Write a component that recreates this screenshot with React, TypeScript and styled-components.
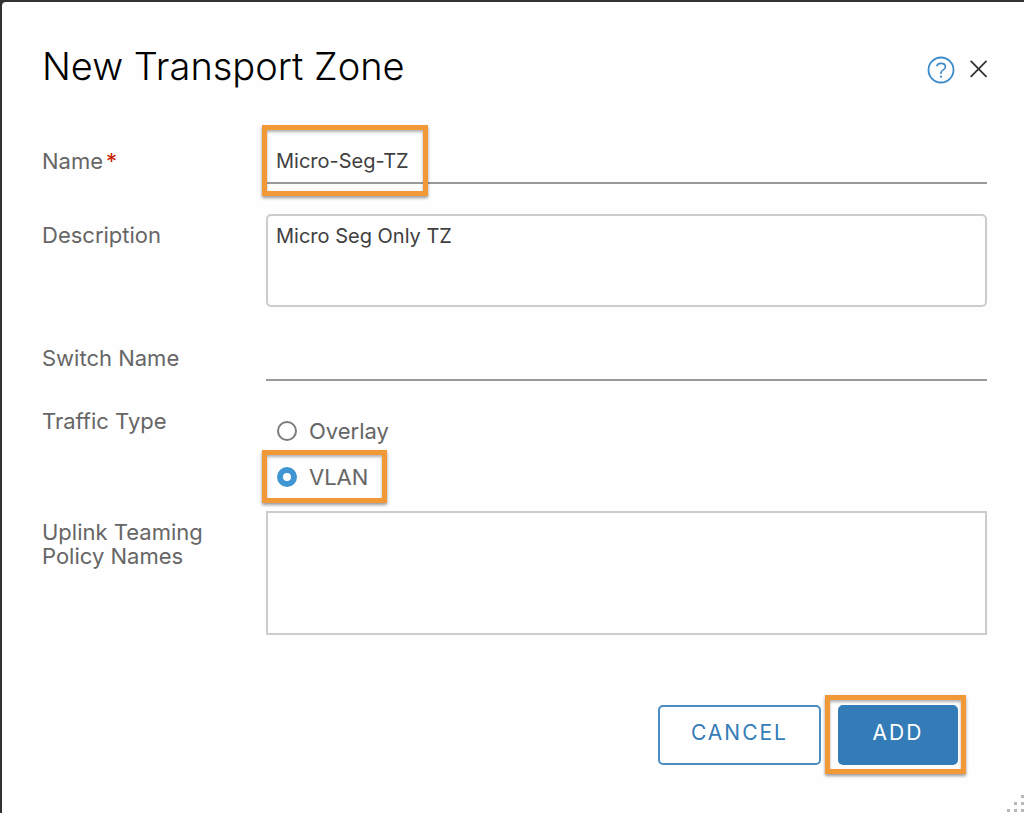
import React, { useState } from "react";
import styled, { createGlobalStyle } from "styled-components";

const GlobalStyle = createGlobalStyle`
  *, *::before, *::after { box-sizing: border-box; }
  body {
    margin: 0;
    background: #333134;
    font-family: Inter, "Open Sans", "Liberation Sans", sans-serif;
  }
`;

const Dialog = styled.main`
  position: relative;
  min-height: 100vh;
  border: solid #333134;
  border-width: 2px 0 0 2px;
  border-radius: 6px 0 0 0;
  background: #fefefe;
  padding: 40px 37px 48px 40px;
`;

const Header = styled.header`
  display: flex;
  align-items: center;
  justify-content: space-between;
  height: 52px;
`;

const Title = styled.h1`
  margin: 0 0 4px;
  color: #000;
  font-size: 38px;
  font-weight: 300;
  line-height: 48px;
`;

const HeaderActions = styled.div`
  display: flex;
  align-items: center;
  gap: 14px;
  margin-top: 4px;
`;

const IconButton = styled.button<{ $color: string }>`
  display: flex;
  padding: 0;
  border: 0;
  background: none;
  color: ${(p) => p.$color};
  cursor: pointer;
`;

const Form = styled.form`
  display: flex;
  flex-direction: column;
`;

const Row = styled.div<{ $top: number }>`
  display: grid;
  grid-template-columns: 224px 1fr;
  align-items: start;
  margin-top: ${(p) => p.$top}px;
`;

const FieldLabel = styled.label<{ $top?: number }>`
  padding: ${(p) => p.$top ?? 0}px 32px 0 0;
  color: #666;
  font-size: 22px;
  font-weight: 400;
  line-height: 24px;
`;

const Required = styled.span`
  margin-left: 3px;
  color: #c92100;
`;

const FieldBox = styled.div`
  position: relative;
`;

const TextInput = styled.input`
  display: block;
  width: 100%;
  height: 48px;
  padding: 4px 10px 0;
  border: 0;
  border-bottom: 2px solid #9a9a9a;
  border-radius: 0;
  outline: 0;
  background: transparent;
  color: #404040;
  font: 400 20px/24px Inter, "Open Sans", sans-serif;
`;

const TextArea = styled.textarea<{ $height: number; $radius: number }>`
  display: block;
  width: 100%;
  height: ${(p) => p.$height}px;
  padding: 8px;
  border: 2px solid #ccc;
  border-radius: ${(p) => p.$radius}px;
  outline: 0;
  background: transparent;
  color: #404040;
  font: 400 20px/24px Inter, "Open Sans", sans-serif;
  resize: none;
`;

const RadioGroup = styled.div`
  display: flex;
  flex-direction: column;
  align-items: flex-start;
  gap: 22px;
  padding: 10px 0 0 11px;
`;

const RadioLabel = styled.label`
  position: relative;
  display: flex;
  align-items: center;
  gap: 12px;
  color: #666;
  font-size: 22px;
  font-weight: 400;
  line-height: 24px;
`;

const Radio = styled.input`
  appearance: none;
  width: 20px;
  height: 20px;
  margin: 0;
  border: 2px solid #7c7c7c;
  border-radius: 50%;
  background: #fff;

  &:checked {
    border: 6px solid #3f96d2;
  }
`;

const Highlight = styled.span<{ $inset: string; $width?: number }>`
  position: absolute;
  inset: ${(p) => p.$inset};
  ${(p) => p.$width && `width: ${p.$width}px;`}
  border: 5px solid #f19937;
  box-shadow: 0 2px 3px rgba(0, 0, 0, 0.4), inset 0 2px 3px rgba(0, 0, 0, 0.3);
  pointer-events: none;
`;

const Actions = styled.footer`
  display: flex;
  justify-content: flex-end;
  gap: 17px;
  margin-top: 70px;
  padding-right: 29px;
`;

const ActionSlot = styled.div`
  position: relative;
`;

const Button = styled.button<{ $primary?: boolean }>`
  min-width: 120px;
  height: 60px;
  padding: 0 31px 4px;
  border: 2px solid ${(p) => (p.$primary ? "#347cb7" : "#4a8dc5")};
  border-radius: 5px;
  background: ${(p) => (p.$primary ? "#347cb7" : "transparent")};
  color: ${(p) => (p.$primary ? "#fff" : "#347cb7")};
  font: 400 21px/24px Inter, "Open Sans", sans-serif;
  letter-spacing: 2px;
  cursor: pointer;
`;

const ResizeGrip = styled.svg`
  position: absolute;
  right: 0;
  bottom: 1px;
`;

const gripDots = [
  [14, 0], [7, 7], [14, 7], [0, 14], [7, 14], [14, 14],
];

export default function App() {
  const [name, setName] = useState("Micro-Seg-TZ");
  const [description, setDescription] = useState("Micro Seg Only TZ");
  const [switchName, setSwitchName] = useState("");
  const [policies, setPolicies] = useState("");
  const [traffic, setTraffic] = useState("vlan");

  return (
    <>
      <GlobalStyle />
      <Dialog>
        <Header>
          <Title>New Transport Zone</Title>
          <HeaderActions>
            <IconButton type="button" aria-label="Help" $color="#3c8bc9">
              <svg width="28" height="28" viewBox="0 0 28 28" fill="none" stroke="currentColor">
                <circle cx="14" cy="14" r="12.5" strokeWidth="1.8" />
                <path d="M9.7 10.2C10.2 8.5 11.8 7.4 14 7.4c2.6 0 4.4 1.3 4.4 3.4 0 1.8-1.2 2.6-2.5 3.3-1.4.8-2 1.4-2 3.1v.7" strokeWidth="1.6" />
                <circle cx="13.9" cy="20.7" r="1.1" fill="currentColor" stroke="none" />
              </svg>
            </IconButton>
            <IconButton type="button" aria-label="Close" $color="#333">
              <svg width="18" height="24" viewBox="0 0 18 24" fill="none" stroke="currentColor" strokeWidth="1.8" strokeLinecap="round">
                <path d="M2.2 3.4 17 18.4M17 3.4 2.2 18.4" />
              </svg>
            </IconButton>
          </HeaderActions>
        </Header>

        <Form id="zone-form" onSubmit={(e) => e.preventDefault()}>
          <Row $top={42}>
            <FieldLabel htmlFor="name" $top={13}>
              Name<Required>*</Required>
            </FieldLabel>
            <FieldBox>
              <TextInput id="name" required value={name} onChange={(e) => setName(e.target.value)} />
              <Highlight $inset="-11px auto -12px -4px" $width={166} />
            </FieldBox>
          </Row>
          <Row $top={30}>
            <FieldLabel htmlFor="description" $top={9}>Description</FieldLabel>
            <TextArea id="description" $height={93} $radius={5} value={description} onChange={(e) => setDescription(e.target.value)} />
          </Row>
          <Row $top={26}>
            <FieldLabel htmlFor="switch-name" $top={13}>Switch Name</FieldLabel>
            <TextInput id="switch-name" value={switchName} onChange={(e) => setSwitchName(e.target.value)} />
          </Row>
          <Row $top={28}>
            <FieldLabel as="span" id="traffic-type">Traffic Type</FieldLabel>
            <RadioGroup role="radiogroup" aria-labelledby="traffic-type">
              <RadioLabel>
                <Radio type="radio" name="traffic" checked={traffic === "overlay"} onChange={() => setTraffic("overlay")} />
                Overlay
              </RadioLabel>
              <RadioLabel>
                <Radio type="radio" name="traffic" checked={traffic === "vlan"} onChange={() => setTraffic("vlan")} />
                VLAN
                <Highlight $inset="-15px -19px -14px -15px" />
              </RadioLabel>
            </RadioGroup>
          </Row>
          <Row $top={22}>
            <FieldLabel htmlFor="policies" $top={9}>Uplink Teaming Policy Names</FieldLabel>
            <TextArea id="policies" $height={124} $radius={0} value={policies} onChange={(e) => setPolicies(e.target.value)} />
          </Row>
        </Form>

        <Actions>
          <Button type="button">CANCEL</Button>
          <ActionSlot>
            <Button type="submit" form="zone-form" $primary>ADD</Button>
            <Highlight $inset="-10px -8px -9px -13px" />
          </ActionSlot>
        </Actions>

        <ResizeGrip width="17" height="17" viewBox="0 0 17 17" fill="#b8b8b8" aria-hidden="true">
          {gripDots.map(([x, y]) => (
            <rect key={`${x}-${y}`} x={x} y={y} width="3" height="3" />
          ))}
        </ResizeGrip>
      </Dialog>
    </>
  );
}
